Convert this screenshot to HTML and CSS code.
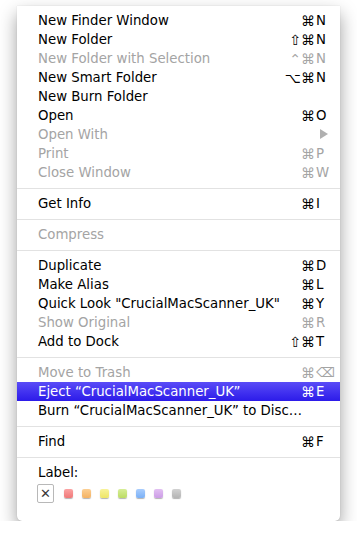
FILE: index.html
```html
<!DOCTYPE html>
<html lang="en">

<head>
    <meta charset="UTF-8">
    <meta name="viewport" content="width=device-width, initial-scale=1.0">
    <title>File menu</title>
    <link rel="stylesheet" href="styles.css">
</head>

<body>
    <div class="menu">
        <div class="item"><span class="label">New Finder Window</span><span class="mods">⌘</span><span class="key">N</span></div>
        <div class="item"><span class="label">New Folder</span><span class="mods">⇧⌘</span><span class="key">N</span></div>
        <div class="item off"><span class="label">New Folder with Selection</span><span class="mods">⌃⌘</span><span class="key">N</span></div>
        <div class="item"><span class="label">New Smart Folder</span><span class="mods">⌥⌘</span><span class="key">N</span></div>
        <div class="item"><span class="label">New Burn Folder</span></div>
        <div class="item"><span class="label">Open</span><span class="mods">⌘</span><span class="key">O</span></div>
        <div class="item off"><span class="label">Open With</span><span class="key"><i class="arrow"></i></span></div>
        <div class="item off"><span class="label">Print</span><span class="mods">⌘</span><span class="key">P</span></div>
        <div class="item off"><span class="label">Close Window</span><span class="mods">⌘</span><span class="key">W</span></div>

        <div class="sep"></div>
        <div class="item"><span class="label">Get Info</span><span class="mods">⌘</span><span class="key">I</span></div>

        <div class="sep"></div>
        <div class="item off"><span class="label">Compress</span></div>

        <div class="sep"></div>
        <div class="item"><span class="label">Duplicate</span><span class="mods">⌘</span><span class="key">D</span></div>
        <div class="item"><span class="label">Make Alias</span><span class="mods">⌘</span><span class="key">L</span></div>
        <div class="item"><span class="label">Quick Look "CrucialMacScanner_UK"</span><span class="mods">⌘</span><span class="key">Y</span></div>
        <div class="item off"><span class="label">Show Original</span><span class="mods">⌘</span><span class="key">R</span></div>
        <div class="item"><span class="label">Add to Dock</span><span class="mods">⇧⌘</span><span class="key">T</span></div>

        <div class="sep"></div>
        <div class="item off"><span class="label">Move to Trash</span><span class="mods">⌘</span><span class="key">⌫</span></div>
        <div class="item active"><span class="label">Eject “CrucialMacScanner_UK”</span><span class="mods">⌘</span><span class="key">E</span></div>
        <div class="item"><span class="label">Burn “CrucialMacScanner_UK” to Disc…</span></div>

        <div class="sep"></div>
        <div class="item"><span class="label">Find</span><span class="mods">⌘</span><span class="key">F</span></div>

        <div class="sep"></div>
        <div class="item"><span class="label">Label:</span></div>
        <div class="labels">
            <span class="none">✕</span>
            <span class="dot red"></span>
            <span class="dot orange"></span>
            <span class="dot yellow"></span>
            <span class="dot green"></span>
            <span class="dot blue"></span>
            <span class="dot purple"></span>
            <span class="dot gray"></span>
        </div>
    </div>
</body>

</html>
```

FILE: styles.css
```css
body {
    margin: 0;
    background: #fff;
    font-family: "DejaVu Sans", sans-serif;
    font-size: 13.3px;
}

.menu {
    width: 323px;
    margin: 6px 0 0 17px;
    padding: 5px 0 18px;
    box-sizing: border-box;
    background: #fff;
    border-radius: 0 0 5px 5px;
    box-shadow: 0 8px 18px rgba(0, 0, 0, 0.38), 0 0 1px rgba(0, 0, 0, 0.25);
}

.item {
    display: flex;
    align-items: center;
    height: 19px;
    padding: 0 6px 0 21px;
    color: #000;
    white-space: nowrap;
}

.item.off {
    color: #a4a4a4;
}

.item.active {
    color: #fff;
    background: linear-gradient(#5a4cf7, #2c1be9);
}

.label {
    flex: 1;
}

.mods {
    text-align: right;
    font-size: 14px;
}

.key {
    width: 18px;
    padding-left: 1px;
}

.arrow {
    display: inline-block;
    margin-left: 4px;
    border-left: 8px solid #b0b0b0;
    border-top: 5px solid transparent;
    border-bottom: 5px solid transparent;
}

.sep {
    height: 1px;
    margin: 6px 0 5px;
    background: #e2e2e2;
}

.labels {
    display: flex;
    align-items: center;
    gap: 9px;
    height: 19px;
    margin-top: 2px;
    padding-left: 20px;
}

.none {
    width: 15px;
    height: 17px;
    border: 1px solid #b8b8b8;
    border-radius: 2px;
    font-size: 13px;
    font-weight: bold;
    color: #3a3a3a;
    display: flex;
    align-items: center;
    justify-content: center;
    margin-right: 1px;
}

.dot {
    width: 9px;
    height: 9px;
    border-radius: 2px;
    box-shadow: 0 1px 1px rgba(0, 0, 0, 0.3);
}

.red { background: linear-gradient(#fba3a3, #f07878); }
.orange { background: linear-gradient(#fccf94, #f4b262); }
.yellow { background: linear-gradient(#f8f39a, #eee566); }
.green { background: linear-gradient(#d7ee98, #bcdc64); }
.blue { background: linear-gradient(#a9cdfd, #7ab0f6); }
.purple { background: linear-gradient(#e2c0f2, #cc9ce6); }
.gray { background: linear-gradient(#d2d2d2, #b4b4b4); }
```
